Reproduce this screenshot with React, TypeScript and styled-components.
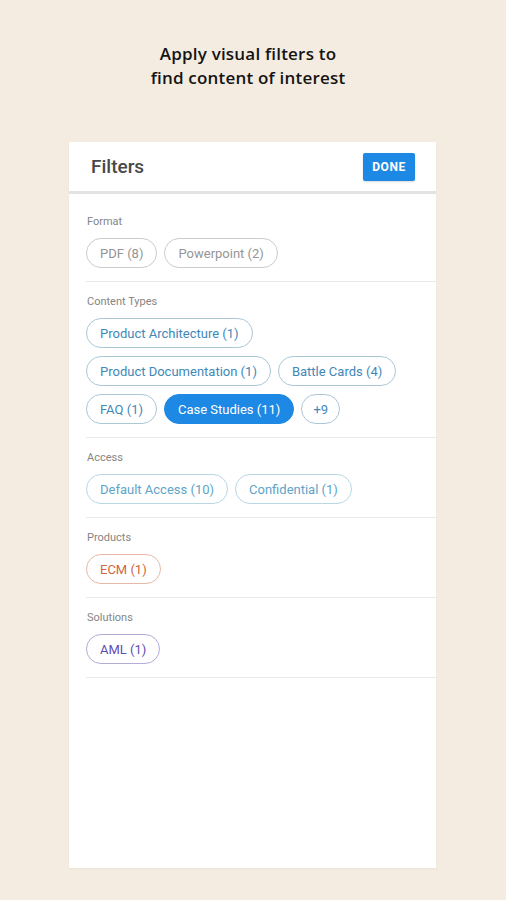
import styled, { createGlobalStyle } from "styled-components";

type Tone = "grey" | "blue" | "light" | "orange" | "purple";

interface Chip {
  label: string;
  active?: boolean;
}

interface Group {
  title: string;
  tone: Tone;
  chips: Chip[];
}

const groups: Group[] = [
  { title: "Format", tone: "grey", chips: [{ label: "PDF (8)" }, { label: "Powerpoint (2)" }] },
  {
    title: "Content Types",
    tone: "blue",
    chips: [
      { label: "Product Architecture (1)" },
      { label: "Product Documentation (1)" },
      { label: "Battle Cards (4)" },
      { label: "FAQ (1)" },
      { label: "Case Studies (11)", active: true },
      { label: "+9" },
    ],
  },
  { title: "Access", tone: "light", chips: [{ label: "Default Access (10)" }, { label: "Confidential (1)" }] },
  { title: "Products", tone: "orange", chips: [{ label: "ECM (1)" }] },
  { title: "Solutions", tone: "purple", chips: [{ label: "AML (1)" }] },
];

const tones: Record<Tone, { text: string; border: string }> = {
  grey: { text: "#959595", border: "#cbcbcb" },
  blue: { text: "#3f88b9", border: "#abc8d7" },
  light: { text: "#5ea4c7", border: "#b9d7e3" },
  orange: { text: "#cf6640", border: "#e7b8a5" },
  purple: { text: "#5d4db1", border: "#b3acd7" },
};

export default function App() {
  return (
    <>
      <GlobalStyle />
      <Page>
        <Headline>
          Apply visual filters to
          <br />
          find content of interest
        </Headline>
        <Card>
          <Header>
            <Title>Filters</Title>
            <DoneButton>DONE</DoneButton>
          </Header>
          <Sections>
            {groups.map((g) => (
              <Section key={g.title}>
                <Label>{g.title}</Label>
                <ChipList>
                  {g.chips.map((c) => (
                    <ChipItem
                      key={c.label}
                      $tone={g.tone}
                      $active={!!c.active}
                      $compact={c.label.length < 3}
                    >
                      {c.label}
                    </ChipItem>
                  ))}
                </ChipList>
              </Section>
            ))}
          </Sections>
        </Card>
      </Page>
    </>
  );
}

const GlobalStyle = createGlobalStyle`
  html, body {
    margin: 0;
    padding: 0;
    background: #f4ece1;
  }
  * {
    box-sizing: border-box;
  }
`;

const Page = styled.div`
  width: 506px;
  height: 900px;
  background: #f4ece1;
  display: flex;
  flex-direction: column;
  align-items: center;
  padding-top: 42px;
`;

const Headline = styled.h1`
  margin: 0 10px 0 0;
  font-family: "Open Sans", "Noto Sans", sans-serif;
  font-weight: 600;
  font-size: 17px;
  line-height: 24px;
  letter-spacing: 0.2px;
  color: #141414;
  text-align: center;
`;

const Card = styled.div`
  margin-top: 52px;
  margin-left: -1px;
  width: 367px;
  height: 726px;
  background: #fff;
  box-shadow: 0 1px 2px rgba(0, 0, 0, 0.04);
  display: flex;
  flex-direction: column;
`;

const Header = styled.div`
  height: 52px;
  display: flex;
  align-items: center;
  justify-content: space-between;
  padding: 0 21px 0 22px;
  border-bottom: 3px solid #e3e3e3;
`;

const Title = styled.div`
  font-family: Roboto, "Liberation Sans", sans-serif;
  font-weight: 500;
  font-size: 19px;
  color: #484848;
`;

const DoneButton = styled.button`
  width: 52px;
  height: 28px;
  border: none;
  border-radius: 2px;
  background: #1e88e5;
  color: #fff;
  font-family: Roboto, "Liberation Sans", sans-serif;
  font-weight: 700;
  font-size: 12px;
  letter-spacing: 0.6px;
  padding: 0;
  box-shadow: 0 1px 2px rgba(0, 0, 0, 0.15);
`;

const Sections = styled.div`
  padding-top: 8px;
  display: flex;
  flex-direction: column;
`;

const Section = styled.div`
  margin-left: 17px;
  padding: 13px 0 13px;
  border-bottom: 1px solid #e8e8e8;
`;

const Label = styled.div`
  font-family: Roboto, "Liberation Sans", sans-serif;
  font-size: 11px;
  line-height: 14px;
  color: #858585;
  padding-left: 1px;
`;

const ChipList = styled.div`
  margin-top: 9px;
  display: flex;
  flex-wrap: wrap;
  gap: 8px 7px;
`;

const ChipItem = styled.div<{ $tone: Tone; $active: boolean; $compact: boolean }>`
  height: 30px;
  padding: 0 ${(p) => (p.$compact ? "11px" : "13px")};
  border-radius: 15px;
  display: flex;
  align-items: center;
  font-family: Roboto, "Liberation Sans", sans-serif;
  font-size: 13px;
  color: ${(p) => (p.$active ? "#fff" : tones[p.$tone].text)};
  background: ${(p) => (p.$active ? "#1e88e5" : "#fff")};
  border: 1px solid ${(p) => (p.$active ? "#1e88e5" : tones[p.$tone].border)};
`;
